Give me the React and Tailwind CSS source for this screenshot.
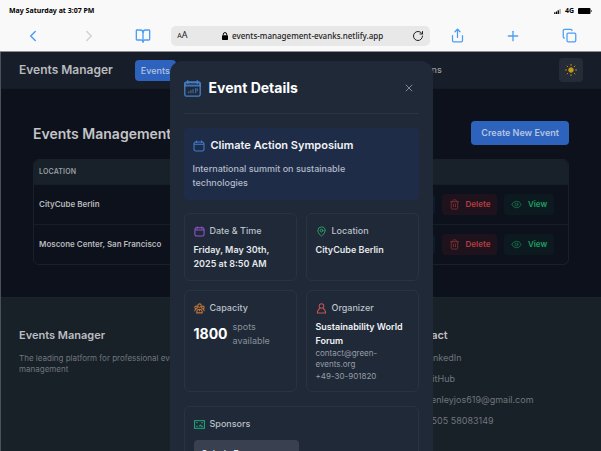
import {
  BookOpen,
  ChevronLeft,
  ChevronRight,
  Copy,
  Eye,
  Github,
  Linkedin,
  Mail,
  MapPin,
  Phone,
  Plus,
  RotateCw,
  Share,
  Trash2,
  X,
} from 'lucide-react';

const events = [{ location: 'CityCube Berlin' }, { location: 'Moscone Center, San Francisco' }];

const contacts = [
  { icon: Linkedin, label: 'LinkedIn', href: '#linkedin' },
  { icon: Github, label: 'GitHub', href: '#github' },
  { icon: Mail, label: 'henleyjos619@gmail.com', href: '#mail' },
  { icon: Phone, label: '+505 58083149', href: '#phone' },
];

function CalendarIcon({ className }) {
  return (
    <svg viewBox="0 0 12 12" className={className} fill="none" stroke="currentColor" strokeWidth="1.1">
      <rect x="1" y="2" width="10" height="9" rx="1.8" />
      <path d="M3.5 0.5v2.5M8.5 0.5v2.5M1 4.3h10" />
    </svg>
  );
}

function CalendarChartIcon({ className }) {
  return (
    <svg viewBox="0 0 16 16" className={className} fill="none" stroke="currentColor" strokeWidth="1.2">
      <rect x="0.75" y="2" width="14.5" height="13.25" rx="1.5" />
      <path d="M0.75 3.500a1.500 1.500 0 0 1 1.500-1.500h11.500a1.500 1.500 0 0 1 1.500 1.500v2H0.750z" fill="currentColor" fillOpacity=".35" />
      <path d="M3.500 0.250v3.500M12.500 0.250v3.500" />
      <path d="M4.500 12.500v-2M6.500 12.500v-3M8.500 12.500v-4M11 12.500v-5M12.500 8v2.500" strokeWidth="1" opacity=".8" />
    </svg>
  );
}

function GroupIcon({ className }) {
  return (
    <svg viewBox="0 0 12 12" className={className} fill="none" stroke="currentColor" strokeWidth="1.2">
      <circle cx="6" cy="2.800" r="1.900" />
      <circle cx="2.300" cy="4.800" r="1.400" />
      <circle cx="9.700" cy="4.800" r="1.400" />
      <path d="M3 10.800c0-2.600 1-4 3-4s3 1.400 3 4zM.800 9c0-1.500.5-2.200 1.800-2.500M11.200 9c0-1.500-.5-2.200-1.800-2.500M6 7v2" />
    </svg>
  );
}

function PersonIcon({ className }) {
  return (
    <svg viewBox="0 0 12 12" className={className} fill="none" stroke="currentColor" strokeWidth="1.1">
      <circle cx="6" cy="3.300" r="2.500" />
      <path d="M4.500 5.700C2.500 6.800 1.500 8.500 1.500 11h9c0-2.500-1-4.200-3-5.300" />
    </svg>
  );
}

function CardIcon({ className }) {
  return (
    <svg viewBox="0 0 12 12" className={className} fill="none" stroke="currentColor" strokeWidth="1.200">
      <rect x="0.600" y="1.800" width="10.800" height="8.400" />
      <path d="M2.500 4h1.500M8 4h1.500M2.500 8h1.500M5.500 8l1.500-1.500L8.200 8h1.500" />
    </svg>
  );
}

function PadlockIcon() {
  return (
    <svg viewBox="0 0 6 8" className="h-2 w-1.5">
      <rect x="0" y="3.300" width="6" height="4.700" rx=".7" />
      <path d="M1.300 3.500V2.300a1.700 1.700 0 0 1 3.400 0v1.200" fill="none" stroke="#000" strokeWidth="1" />
    </svg>
  );
}

function SunIcon() {
  return (
    <svg viewBox="0 0 12 12" className="size-3" fill="#c39a12" stroke="#c39a12" strokeWidth=".9">
      <circle cx="6" cy="6" r="2.300" />
      <path d="M6 0v1.800M6 10.200V12M0 6h1.800M10.200 6H12M1.800 1.800l1.200 1.200M9 9l1.200 1.200M10.200 1.800L9 3M3 9l-1.200 1.200" />
    </svg>
  );
}

function BrowserBar() {
  return (
    <header className="shrink-0 border-b border-[#8a8d92] bg-[#f9f9f9] text-black">
      <div className="flex h-5 items-center justify-between px-[9px] pt-0.5 font-['Noto_Sans','Open_Sans',sans-serif] text-[7px] font-bold">
        <span>May Saturday at 3:07 PM</span>
        <span className="flex items-center gap-1">
          <svg viewBox="0 0 8 6" className="h-[5px] w-[7px]" fill="currentColor">
            <path d="M0 4h1.500v2H0zM2.100 3h1.500v3H2.100zM4.200 1.500h1.500V6H4.200z" />
            <path d="M6.300 0h1.500v6H6.300z" opacity=".4" />
          </svg>
          <span>4G</span>
          <svg viewBox="0 0 14 6" className="h-[6px] w-[14px]">
            <rect x="0" y="0" width="12.500" height="6" rx="1" />
            <rect x="13" y="2" width="1" height="2" fill="#777" />
          </svg>
        </span>
      </div>
      <div className="flex h-[31px] items-center text-[#4a9ef5]">
        <div className="flex flex-1 items-center justify-between pl-6 pr-5">
          <button type="button" aria-label="Back">
            <ChevronLeft className="size-[18px]" />
          </button>
          <button type="button" aria-label="Forward" className="text-[#d2d2d2]">
            <ChevronRight className="size-[18px]" />
          </button>
          <button type="button" aria-label="Bookmarks">
            <BookOpen className="size-4" />
          </button>
        </div>
        <div className="flex h-5 w-[43%] items-center rounded-[5px] bg-[#e8e8e8] px-1.5 font-['Noto_Sans','Open_Sans',sans-serif] text-[#222]">
          <button type="button" aria-label="Text size" className="flex items-baseline leading-3">
            <span className="text-[7px]">A</span>
            <span className="text-[9px]">A</span>
          </button>
          <div className="flex flex-1 items-center justify-center gap-1 pl-1.5">
            <PadlockIcon />
            <span className="text-[8px] font-medium leading-3">events-management-evanks.netlify.app</span>
          </div>
          <button type="button" aria-label="Reload">
            <RotateCw className="size-3" />
          </button>
        </div>
        <div className="flex flex-1 items-center justify-between pl-5 pr-6">
          <button type="button" aria-label="Share">
            <Share className="size-[15px]" />
          </button>
          <button type="button" aria-label="New tab">
            <Plus className="size-4" />
          </button>
          <button type="button" aria-label="Tabs">
            <Copy className="size-[15px]" />
          </button>
        </div>
      </div>
    </header>
  );
}

function NavBar() {
  return (
    <nav className="flex h-[37px] items-center border-b border-[#141b25] bg-[#171e29] px-[18px] text-[9px] font-medium text-[#9a9da3]">
      <span className="mr-[22px] text-[12px] font-semibold text-[#b9babd]">Events Manager</span>
      <div className="flex w-[313px] items-center justify-between">
        <a href="#events" className="rounded bg-[#2d63bd] px-1.5 py-1 leading-[13px] text-[#b4c4e3]">Events</a>
        <a href="#registrations" className="px-1.5">Registrations</a>
      </div>
      <button type="button" aria-label="Toggle theme" className="ml-auto flex size-6 items-center justify-center rounded bg-[#252c37]">
        <SunIcon />
      </button>
    </nav>
  );
}

function EventsTable() {
  return (
    <div className="overflow-hidden rounded-md border border-[#1a202a]">
      <table className="w-full text-left text-[8px] font-semibold">
        <thead className="bg-[#182029] text-[7px] text-[#9b9ea3]">
          <tr className="h-6">
            <th className="px-[5px] font-semibold tracking-wide">LOCATION</th>
            <th aria-label="Actions" />
          </tr>
        </thead>
        <tbody>
          {events.map((event) => (
            <tr key={event.location} className="h-10 border-t border-[#171d27]">
              <td className="px-[5px] text-[#b6b8bc]">{event.location}</td>
              <td className="pr-3.5">
                <div className="flex justify-end gap-[7px]">
                  <button type="button" className="h-[21px] w-11 rounded bg-[#0e1a2e] text-[#2d63bd]">Edit</button>
                  <button type="button" className="flex h-[21px] w-[55px] items-center justify-center gap-1.5 rounded bg-[#1e131c] text-[#b83c42]">
                    <Trash2 className="size-[11px] text-[#7b2f36]" />
                    Delete
                  </button>
                  <button type="button" className="flex h-[21px] w-[50px] items-center justify-center gap-1.5 rounded bg-[#0c1a20] text-[#1fa061]">
                    <Eye className="size-[11px] text-[#1b6b4b]" />
                    View
                  </button>
                </div>
              </td>
            </tr>
          ))}
        </tbody>
      </table>
    </div>
  );
}

function Footer() {
  return (
    <footer className="grid flex-1 grid-cols-3 gap-4 border-t border-[#1c242d] bg-[#182028] px-[18px] pt-[29px] text-[#71767d]">
      <div>
        <h3 className="text-[11px] font-semibold leading-4 text-[#bcbec1]">Events Manager</h3>
        <p className="mt-2.5 text-[8px] leading-[11px]">The leading platform for professional event management</p>
      </div>
      <div />
      <div>
        <h3 className="text-[11px] font-semibold leading-4 text-[#bcbec1]">Contact</h3>
        <ul className="mt-[9px] flex flex-col gap-[9px] text-[9px] leading-3">
          {contacts.map(({ icon: Icon, label, href }) => (
            <li key={label}>
              <a href={href} className="flex items-center gap-2.5">
                <Icon className="size-2.5" />
                {label}
              </a>
            </li>
          ))}
        </ul>
      </div>
    </footer>
  );
}

function Card({ icon, title, children }) {
  return (
    <section className="rounded-md border border-[#2a3340] p-[9px]">
      <h4 className="flex items-center gap-[5px] text-[9px] font-medium leading-4 text-[#bcc1c9]">
        {icon}
        {title}
      </h4>
      {children}
    </section>
  );
}

function EventDialog() {
  return (
    <div role="dialog" aria-label="Event Details" className="h-full w-[263px] rounded-t-xl bg-[#202937] px-3.5 pt-[13px]">
      <div className="flex items-center border-b border-[#2b3441] pb-[11px] pr-1">
        <CalendarChartIcon className="size-[17px] text-[#4580cc]" />
        <h2 className="ml-2 text-[14px] font-bold leading-7 text-white">Event Details</h2>
        <button type="button" aria-label="Close" className="ml-auto text-[#7f8792]">
          <X className="size-3" />
        </button>
      </div>

      <section className="mt-3.5 rounded bg-[#1f2c48] px-[9px] pb-2.5 pt-2">
        <h3 className="flex items-center gap-1.5 text-[11px] font-semibold leading-[19px] text-[#f1f3f6]">
          <CalendarIcon className="size-3 text-[#3f7ccd]" />
          Climate Action Symposium
        </h3>
        <p className="mt-[7px] pr-8 text-[9px] font-medium leading-[14px] text-[#b3bac7]">
          International summit on sustainable technologies
        </p>
      </section>

      <div className="mt-[13px] grid grid-cols-2 gap-[9px] text-[9px] leading-[14px]">
        <Card icon={<CalendarIcon className="size-[11px] text-[#9357d3]" />} title="Date & Time">
          <p className="mt-1 font-semibold text-[#e4e7eb]">Friday, May 30th, 2025 at 8:50 AM</p>
        </Card>
        <Card icon={<MapPin className="size-[11px] text-[#2fa56a]" />} title="Location">
          <p className="mt-1 font-semibold text-[#e4e7eb]">CityCube Berlin</p>
        </Card>
        <Card icon={<GroupIcon className="size-[11px] text-[#c0743a]" />} title="Capacity">
          <p className="mt-1 flex items-center gap-[5px] text-[#878f9b]">
            <strong className="text-[14px] font-bold text-white">1800</strong>
            <span>spots available</span>
          </p>
        </Card>
        <Card icon={<PersonIcon className="size-[11px] text-[#c4525a]" />} title="Organizer">
          <p className="mt-1 font-semibold text-[#f1f3f6]">Sustainability World Forum</p>
          <p className="text-[8px] leading-[11px] text-[#969da8]">contact@green-events.org</p>
          <p className="text-[8px] leading-3 text-[#969da8]">+49-30-901820</p>
        </Card>
      </div>

      <div className="mt-3.5">
        <Card icon={<CardIcon className="size-[11px] text-[#1ea078]" />} title="Sponsors">
          <div className="mt-2 w-[105px] rounded bg-[#394150] px-2 py-[7px] text-[9px] font-medium leading-[14px] text-[#e4e7eb]">
            Solaris Energy
          </div>
        </Card>
      </div>
    </div>
  );
}

export default function App() {
  return (
    <div className="flex h-screen flex-col overflow-hidden font-['Inter',sans-serif]">
      <BrowserBar />
      <div className="relative flex min-h-0 flex-1 flex-col border-l border-[#4c5159] bg-[#0d111b]">
        <NavBar />
        <main className="px-8 pb-8 pt-8">
          <div className="mb-3.5 flex items-center justify-between">
            <h1 className="text-[14px] font-semibold text-[#c3c4c7]">Events Management</h1>
            <button type="button" className="rounded bg-[#2d63bd] px-2.5 py-1 text-[9px] font-semibold leading-4 text-[#b4c4e3]">
              Create New Event
            </button>
          </div>
          <EventsTable />
        </main>
        <Footer />
        <div className="absolute inset-0 flex justify-center overflow-hidden pt-[9px]">
          <EventDialog />
        </div>
      </div>
    </div>
  );
}
